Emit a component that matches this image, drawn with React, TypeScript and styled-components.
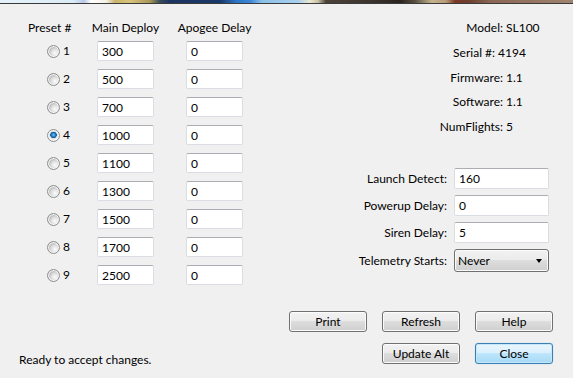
import React from 'react';
import styled, { createGlobalStyle, css } from 'styled-components';

const GlobalStyle = createGlobalStyle`
    html, body {
        margin: 0;
        padding: 0;
        background: #f0f0f0;
    }
`;

const presets = [
    { id: 1, main: '300', apogee: '0' },
    { id: 2, main: '500', apogee: '0' },
    { id: 3, main: '700', apogee: '0' },
    { id: 4, main: '1000', apogee: '0' },
    { id: 5, main: '1100', apogee: '0' },
    { id: 6, main: '1300', apogee: '0' },
    { id: 7, main: '1500', apogee: '0' },
    { id: 8, main: '1700', apogee: '0' },
    { id: 9, main: '2500', apogee: '0' },
];

const info = [
    { label: 'Model:', value: 'SL100', shift: 0 },
    { label: 'Serial #:', value: '4194', shift: -8 },
    { label: 'Firmware:', value: '1.1', shift: 0 },
    { label: 'Software:', value: '1.1', shift: 0 },
    { label: 'NumFlights:', value: '5', shift: 0 },
];

const settings = [
    { label: 'Launch Detect:', value: '160' },
    { label: 'Powerup Delay:', value: '0' },
    { label: 'Siren Delay:', value: '5' },
];

const App: React.FC = () => {
    return (
        <>
            <GlobalStyle />
            <Window>
                <TitleStrip />
                <Main>
                    <PresetTable>
                        <TableHeader>
                            <PresetHeading>Preset #</PresetHeading>
                            <ColumnHeading>Main Deploy</ColumnHeading>
                            <ColumnHeading>Apogee Delay</ColumnHeading>
                        </TableHeader>
                        {presets.map((p) => (
                            <PresetRow key={p.id}>
                                <RadioLabel>
                                    <Radio type="radio" name="preset" defaultChecked={p.id === 4} />
                                    {p.id}
                                </RadioLabel>
                                <TextBox defaultValue={p.main} />
                                <TextBox defaultValue={p.apogee} />
                            </PresetRow>
                        ))}
                    </PresetTable>
                    <SidePanel>
                        <InfoGrid>
                            {info.map((row) => (
                                <React.Fragment key={row.label}>
                                    <InfoLabel $shift={row.shift}>{row.label}</InfoLabel>
                                    <InfoValue $shift={row.shift}>{row.value}</InfoValue>
                                </React.Fragment>
                            ))}
                        </InfoGrid>
                        <SettingsGrid>
                            {settings.map((s) => (
                                <React.Fragment key={s.label}>
                                    <SettingLabel>{s.label}</SettingLabel>
                                    <TextBox $wide defaultValue={s.value} />
                                </React.Fragment>
                            ))}
                            <SettingLabel>Telemetry Starts:</SettingLabel>
                            <Dropdown role="combobox">
                                <span>Never</span>
                                <Caret />
                            </Dropdown>
                        </SettingsGrid>
                    </SidePanel>
                </Main>
                <Footer>
                    <StatusText>Ready to accept changes.</StatusText>
                    <ButtonGrid>
                        <Button>Print</Button>
                        <Button>Refresh</Button>
                        <Button>Help</Button>
                        <Button $col={2}>Update Alt</Button>
                        <Button $col={3} $primary>
                            Close
                        </Button>
                    </ButtonGrid>
                </Footer>
            </Window>
        </>
    );
};

const Window = styled.div`
    width: 573px;
    height: 378px;
    background: #f0f0f0;
    display: flex;
    flex-direction: column;
    overflow: hidden;
    font-family: Lato, 'Noto Sans', sans-serif;
    font-size: 12px;
    line-height: 16px;
    color: #000;
`;

const TitleStrip = styled.div`
    height: 3px;
    border-bottom: 1px solid #3a3a3a;
    background: linear-gradient(
        90deg,
        #e4f3fa 0px,
        #dcecf6 73px,
        #b8c8e8 84px,
        #ffffff 91px,
        #f4f2e8 106px,
        #c9b46a 115px,
        #d9c27a 130px,
        #a89858 150px,
        #3a4a5a 160px,
        #1c3462 170px,
        #1a3868 220px,
        #2c74c6 236px,
        #3a86d4 250px,
        #8cc0e8 262px,
        #a8d0ee 298px,
        #ece8cc 310px,
        #c8c0a8 318px,
        #4c4238 326px,
        #3c342e 370px,
        #2a2420 400px,
        #5a5040 415px,
        #c4b48c 432px,
        #b89a78 446px,
        #7a3828 455px,
        #6e4030 470px,
        #8a6654 490px,
        #a08470 573px
    );
`;

const Main = styled.div`
    display: flex;
    justify-content: space-between;
    padding: 16px 25px 0 28px;
`;

const PresetTable = styled.div`
    display: flex;
    flex-direction: column;
    gap: 8px;
`;

const tableColumns = css`
    display: grid;
    grid-template-columns: 45px 73px 73px;
    column-gap: 16px;
    align-items: center;
`;

const TableHeader = styled.div`
    ${tableColumns};
    height: 16px;
    margin-bottom: -3px;
`;

const PresetHeading = styled.div`
    justify-self: start;
    white-space: nowrap;
`;

const ColumnHeading = styled.div`
    justify-self: center;
    white-space: nowrap;
`;

const PresetRow = styled.div`
    ${tableColumns};
    height: 20px;
`;

const RadioLabel = styled.label`
    display: flex;
    align-items: center;
    gap: 3px;
    margin-left: 19px;
`;

const Radio = styled.input`
    appearance: none;
    margin: 0;
    width: 13px;
    height: 13px;
    border-radius: 50%;
    border: 1px solid #8e8f8f;
    box-sizing: border-box;
    background: radial-gradient(circle at 65% 65%, #fbfbfb 0, #e6e6e6 3px, #c4c4c4 6px);
    box-shadow: inset 0 0 0 1px #f4f4f4;

    &:checked {
        background: radial-gradient(circle at 50% 45%, #7cc8f4 0, #2b8fd6 1.5px, #0e5596 3px, #dcdcdc 3.5px, #f6f6f6 5px);
    }
`;

const TextBox = styled.input<{ $wide?: boolean }>`
    justify-self: center;
    box-sizing: border-box;
    width: ${(p) => (p.$wide ? '95px' : '57px')};
    height: ${(p) => (p.$wide ? '21px' : '20px')};
    margin: 0;
    padding: 0 4px;
    border: 1px solid #dadde3;
    border-top-color: #abadb3;
    border-radius: 2px;
    background: #fff;
    font: inherit;
    color: #000;
    outline: none;
`;

const SidePanel = styled.div`
    width: 208px;
    display: flex;
    flex-direction: column;
`;

const InfoGrid = styled.div`
    display: grid;
    grid-template-columns: 163px auto;
    column-gap: 3px;
    row-gap: 8.75px;
`;

const InfoLabel = styled.div<{ $shift: number }>`
    text-align: right;
    white-space: nowrap;
    transform: translateX(${(p) => p.$shift}px);
`;

const InfoValue = styled.div<{ $shift: number }>`
    white-space: nowrap;
    transform: translateX(${(p) => p.$shift}px);
`;

const SettingsGrid = styled.div`
    margin-top: 33px;
    display: grid;
    grid-template-columns: 107px 95px;
    column-gap: 7px;
    row-gap: 6px;
    align-items: center;
`;

const SettingLabel = styled.div`
    justify-self: end;
    white-space: nowrap;
`;

const buttonFace = css`
    box-sizing: border-box;
    border: 1px solid #707070;
    border-radius: 3px;
    background: linear-gradient(#f2f2f2 0%, #ebebeb 50%, #dddddd 50%, #cfcfcf 100%);
    box-shadow: inset 0 0 0 1px #fbfbfb;
`;

const Dropdown = styled.div`
    ${buttonFace};
    height: 23px;
    display: flex;
    align-items: center;
    justify-content: space-between;
    padding: 0 6px 0 3px;
`;

const Caret = styled.span`
    width: 0;
    height: 0;
    border-left: 3.5px solid transparent;
    border-right: 3.5px solid transparent;
    border-top: 4px solid #000;
`;

const Footer = styled.div`
    display: flex;
    justify-content: space-between;
    padding: 0 20px 0 19px;
    margin-top: 26px;
`;

const StatusText = styled.div`
    align-self: flex-end;
    margin-bottom: -4px;
`;

const ButtonGrid = styled.div`
    display: grid;
    grid-template-columns: repeat(3, 78px);
    grid-auto-rows: 21px;
    column-gap: 15px;
    row-gap: 11px;
`;

const Button = styled.button<{ $col?: number; $primary?: boolean }>`
    ${buttonFace};
    grid-column: ${(p) => p.$col ?? 'auto'};
    margin: 0;
    padding: 0;
    font: inherit;
    color: #000;
    ${(p) =>
        p.$primary &&
        css`
            border-color: #3c7fb1;
            background: linear-gradient(#eaf6fd 0%, #d9f0fc 50%, #bee6fd 50%, #a7d9f5 100%);
            box-shadow: inset 0 0 0 1px #c4e8fb, 0 0 1px #6fc0ee;
        `}
`;

export default App;
